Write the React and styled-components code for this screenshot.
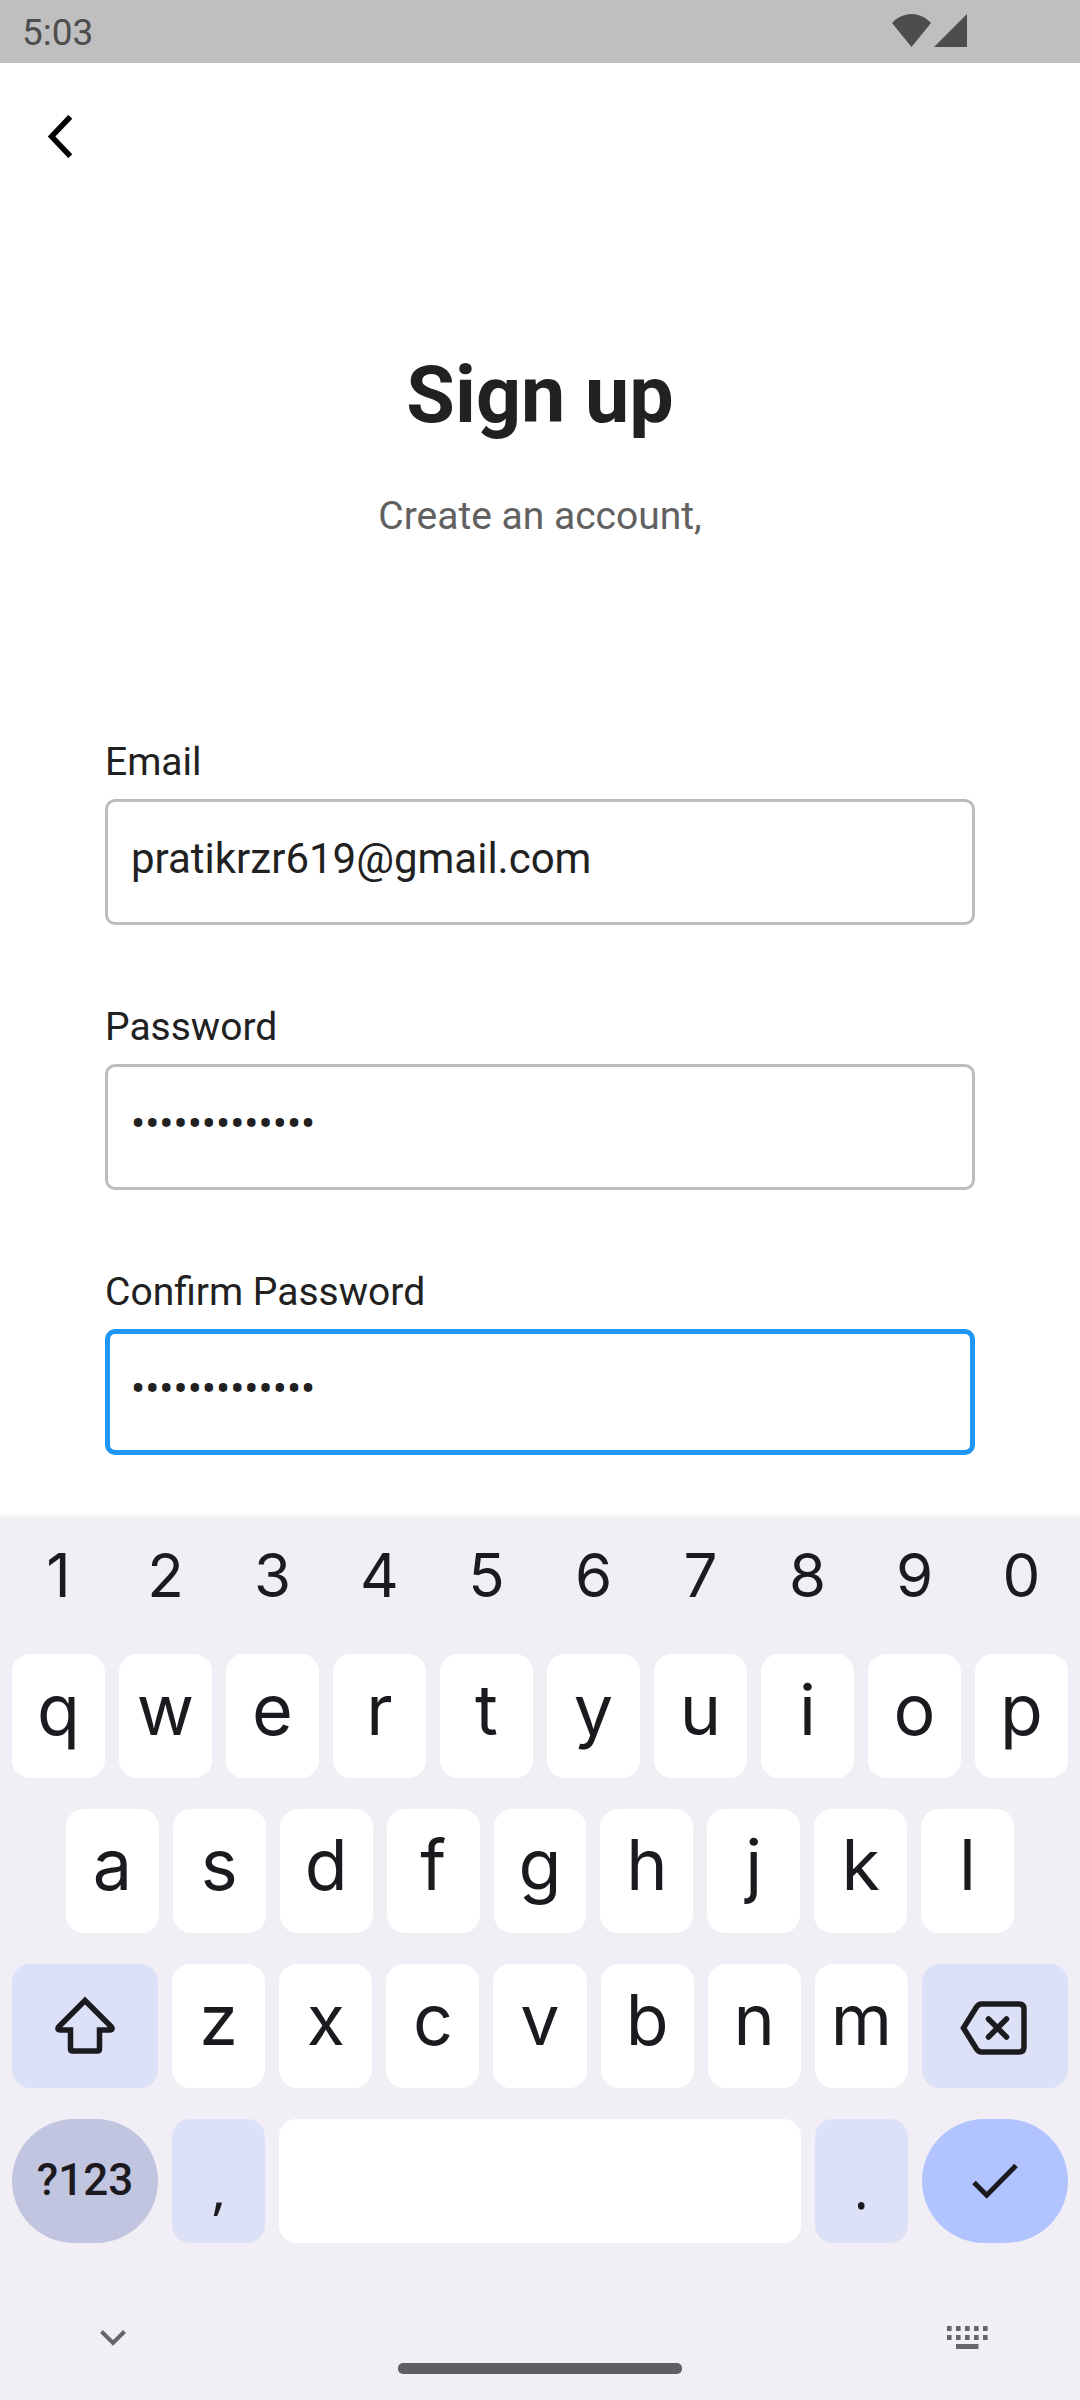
import React, { useState } from "react";
import styled, { createGlobalStyle } from "styled-components";

const GlobalStyle = createGlobalStyle`
  *, *::before, *::after { box-sizing: border-box; }
  body { margin: 0; background: #ffffff; font-family: Roboto, "Noto Sans", sans-serif; }
  button, input { font: inherit; color: inherit; }
`;

const Page = styled.div`
  min-height: 100vh;
  display: flex;
  flex-direction: column;
  color: #212121;
`;

const StatusBar = styled.header`
  height: 63px;
  padding: 2px 113px 0 22px;
  display: flex;
  align-items: center;
  justify-content: space-between;
  background: #bfbfbf;
  color: #4d4d4d;
  font-size: 37px;
  line-height: 42px;
`;

const StatusIcons = styled.div`
  display: flex;
  gap: 3px;
  padding-bottom: 4px;
`;

const AppBar = styled.nav`
  height: 147px;
  padding: 0 24px;
  display: flex;
  align-items: center;
`;

const IconButton = styled.button`
  display: flex;
  align-items: center;
  justify-content: center;
  padding: ${(p) => p.$pad || "0"};
  border: 0;
  background: none;
  color: ${(p) => p.$color || "#000000"};
  cursor: pointer;
`;

const Main = styled.main`
  padding: 139px 105px 62px;
`;

const Title = styled.h1`
  margin: 0 0 52px;
  font-size: 79px;
  line-height: 92px;
  font-weight: 700;
  text-align: center;
`;

const Subtitle = styled.p`
  margin: 0 0 200px;
  font-size: 39px;
  line-height: 46px;
  color: #616161;
  text-align: center;
`;

const Form = styled.form`
  display: flex;
  flex-direction: column;
  gap: 79px;
`;

const Field = styled.div`
  display: flex;
  flex-direction: column;
  gap: 14px;
`;

const Label = styled.label`
  font-size: 39px;
  line-height: 46px;
`;

const TextBox = styled.input`
  width: 100%;
  height: 126px;
  padding: ${(p) => (p.$active ? "0 21px 8px" : "0 23px 8px")};
  border: ${(p) => (p.$active ? "5px solid #2196f3" : "3px solid #bdbdbd")};
  border-radius: 10px;
  background: #ffffff;
  font-size: 42px;
  outline: none;
`;

const Keyboard = styled.section`
  margin-top: auto;
  padding-top: 12px;
  display: flex;
  flex-direction: column;
  gap: 31px;
  background: #f1eff5;
  box-shadow: 0 0 6px rgba(0, 0, 0, 0.08);
  color: #1b1b1f;
  font-family: Inter, Roboto, sans-serif;
`;

const KeyRow = styled.div`
  display: grid;
  grid-template-columns: ${(p) => p.$columns};
  gap: 14px;
  padding: 0 ${(p) => p.$inset || 12}px;
`;

const tones = {
  letter: "#ffffff",
  soft: "#dde1f8",
  symbols: "#c1c5df",
  enter: "#b2c4ff",
};

const Key = styled.button`
  min-width: 0;
  height: 124px;
  padding: 0;
  display: flex;
  align-items: center;
  justify-content: center;
  border: 0;
  border-radius: ${(p) => (p.$pill ? 62 : 18)}px;
  background: ${(p) => tones[p.$tone || "letter"]};
  cursor: pointer;
`;

const LetterKey = styled(Key)`
  padding-bottom: 14px;
  font-size: 70px;
`;

const DigitKey = styled(Key)`
  height: 94px;
  padding-bottom: 2px;
  background: none;
  font-size: 60px;
`;

const SymbolsKey = styled(Key)`
  padding-bottom: 2px;
  font-family: Roboto, sans-serif;
  font-size: 44px;
  font-weight: 500;
`;

const PunctuationKey = styled(Key)`
  padding-top: 14px;
  font-family: "Noto Sans", sans-serif;
  font-size: 54px;
`;

const NavRow = styled.footer`
  height: 126px;
  padding: 0 92px 26px 100px;
  display: flex;
  align-items: flex-end;
  justify-content: space-between;
`;

const Handle = styled.div`
  width: 284px;
  height: 11px;
  border-radius: 5px;
  background: #5f5f61;
`;

const WifiIcon = () => (
  <svg width="39" height="33" viewBox="0 0 39 33" fill="currentColor" aria-hidden="true">
    <path d="M19.5 33 0 9C5 3.500 12 0 19.500 0S34 3.500 39 9Z" />
  </svg>
);

const SignalIcon = () => (
  <svg width="33" height="33" viewBox="0 0 33 33" fill="currentColor" aria-hidden="true">
    <path d="M33 0V33H0Z" />
  </svg>
);

const BackIcon = () => (
  <svg width="24" height="43" viewBox="0 0 24 43" fill="none" stroke="currentColor" strokeWidth="5.500" aria-hidden="true">
    <path d="M22.300 1.800 3.500 21.500 22.300 41.200" />
  </svg>
);

const ShiftIcon = () => (
  <svg width="60" height="60" viewBox="0 0 60 60" fill="none" stroke="currentColor" strokeWidth="5.500" aria-hidden="true">
    <path d="M30 4.500 4 30.500C2 32.500 3 34 5 34H15.500V53Q15.500 55 17.500 55H42.500Q44.500 55 44.500 53V34H55C57 34 58 32.500 56 30.500Z" />
  </svg>
);

const BackspaceIcon = () => (
  <svg width="69" height="58" viewBox="0 -4 69 58" fill="none" stroke="currentColor" strokeWidth="5.500" aria-hidden="true">
    <path d="M3.500 27 16.500 6Q18.500 3 21.500 3H59Q64 3 64 8V46Q64 51 59 51H21.500Q18.500 51 16.500 48Z" />
    <path d="M28.500 18 46.500 36M46.500 18 28.500 36" strokeLinecap="round" />
  </svg>
);

const CheckIcon = () => (
  <svg width="46" height="36" viewBox="0 0 46 36" fill="none" stroke="currentColor" strokeWidth="5" aria-hidden="true">
    <path d="M2 19.500 14.700 32.200 44 2.500" />
  </svg>
);

const ChevronDownIcon = () => (
  <svg width="26" height="24" viewBox="0 0 26 24" fill="none" stroke="currentColor" strokeWidth="4" aria-hidden="true">
    <path d="M1.500 5.500 13 17 24.500 5.500" />
  </svg>
);

const KeyboardIcon = () => (
  <svg width="41" height="24" viewBox="0 0 41 24" fill="currentColor" aria-hidden="true">
    {[0, 9, 18, 27, 36].map((x) => (
      <React.Fragment key={x}>
        <rect x={x} y="0" width="4.600" height="5" />
        <rect x={x} y="9" width="4.600" height="5" />
      </React.Fragment>
    ))}
    <rect x="9" y="18" width="22.500" height="5" />
  </svg>
);

const fields = [
  { id: "email", label: "Email", type: "email", value: "pratikrzr619@gmail.com" },
  { id: "password", label: "Password", type: "password", value: "password12345" },
  { id: "confirm", label: "Confirm Password", type: "password", value: "password12345", active: true },
];

function FormField({ field }) {
  const [value, setValue] = useState(field.value);
  return (
    <Field>
      <Label htmlFor={field.id}>{field.label}</Label>
      <TextBox
        id={field.id}
        type={field.type}
        value={value}
        $active={field.active}
        autoComplete="off"
        onChange={(e) => setValue(e.target.value)}
      />
    </Field>
  );
}

const letters = (text) =>
  [...text].map((c) => (
    <LetterKey type="button" key={c}>
      {c}
    </LetterKey>
  ));

export default function App() {
  return (
    <Page>
      <GlobalStyle />
      <StatusBar>
        <span>5:03</span>
        <StatusIcons>
          <WifiIcon />
          <SignalIcon />
        </StatusIcons>
      </StatusBar>
      <AppBar>
        <IconButton type="button" aria-label="Back" $pad="24px">
          <BackIcon />
        </IconButton>
      </AppBar>
      <Main>
        <Title>Sign up</Title>
        <Subtitle>Create an account,</Subtitle>
        <Form>
          {fields.map((f) => (
            <FormField key={f.id} field={f} />
          ))}
        </Form>
      </Main>
      <Keyboard aria-label="Keyboard">
        <KeyRow $columns="repeat(10, 1fr)">
          {[..."1234567890"].map((d) => (
            <DigitKey type="button" key={d}>
              {d}
            </DigitKey>
          ))}
        </KeyRow>
        <KeyRow $columns="repeat(10, 1fr)">{letters("qwertyuiop")}</KeyRow>
        <KeyRow $columns="repeat(9, 1fr)" $inset={66}>
          {letters("asdfghjkl")}
        </KeyRow>
        <KeyRow $columns="146fr repeat(7, 93fr) 146fr">
          <Key type="button" $tone="soft" aria-label="Shift">
            <ShiftIcon />
          </Key>
          {letters("zxcvbnm")}
          <Key type="button" $tone="soft" aria-label="Backspace">
            <BackspaceIcon />
          </Key>
        </KeyRow>
        <KeyRow $columns="146fr 93fr 521fr 93fr 146fr">
          <SymbolsKey type="button" $tone="symbols" $pill>
            ?123
          </SymbolsKey>
          <PunctuationKey type="button" $tone="soft">
            ,
          </PunctuationKey>
          <Key type="button" aria-label="Space" />
          <PunctuationKey type="button" $tone="soft">
            .
          </PunctuationKey>
          <Key type="button" $tone="enter" $pill aria-label="Done">
            <CheckIcon />
          </Key>
        </KeyRow>
        <NavRow>
          <IconButton type="button" aria-label="Hide keyboard" $color="#666668" $pad="0 7px 24px 0">
            <ChevronDownIcon />
          </IconButton>
          <Handle />
          <IconButton type="button" aria-label="Switch keyboard" $color="#666668" $pad="0 0 24px">
            <KeyboardIcon />
          </IconButton>
        </NavRow>
      </Keyboard>
    </Page>
  );
}
